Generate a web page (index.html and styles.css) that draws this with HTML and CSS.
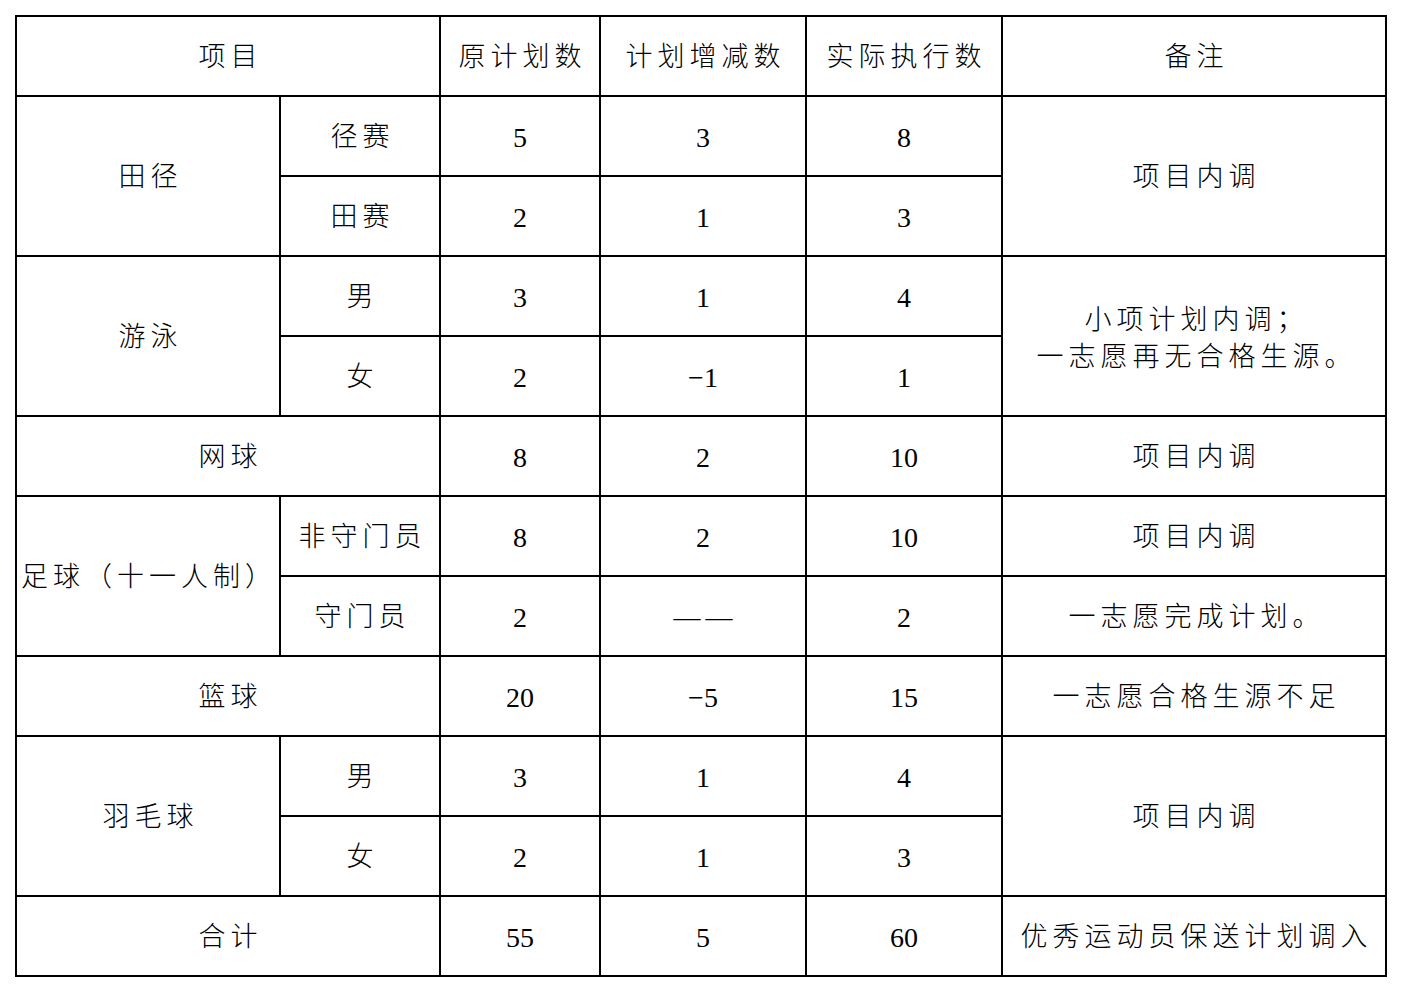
FILE: index.html
```html
<!DOCTYPE html>
<html lang="zh-CN">
<head>
<meta charset="utf-8">
<title>计划执行表</title>
<link rel="stylesheet" href="styles.css">
</head>
<body>
<table class="plan">
  <colgroup>
    <col class="c1"><col class="c2"><col class="c3"><col class="c4"><col class="c5"><col class="c6">
  </colgroup>
  <tr>
    <td colspan="2">项目</td>
    <td>原计划数</td>
    <td>计划增减数</td>
    <td>实际执行数</td>
    <td>备注</td>
  </tr>
  <tr>
    <td rowspan="2">田径</td>
    <td>径赛</td>
    <td class="num">5</td>
    <td class="num">3</td>
    <td class="num">8</td>
    <td rowspan="2">项目内调</td>
  </tr>
  <tr>
    <td>田赛</td>
    <td class="num">2</td>
    <td class="num">1</td>
    <td class="num">3</td>
  </tr>
  <tr>
    <td rowspan="2">游泳</td>
    <td>男</td>
    <td class="num">3</td>
    <td class="num">1</td>
    <td class="num">4</td>
    <td rowspan="2" class="multi">小项计划内调；<br>一志愿再无合格生源。</td>
  </tr>
  <tr>
    <td>女</td>
    <td class="num">2</td>
    <td class="num">−1</td>
    <td class="num">1</td>
  </tr>
  <tr>
    <td colspan="2">网球</td>
    <td class="num">8</td>
    <td class="num">2</td>
    <td class="num">10</td>
    <td>项目内调</td>
  </tr>
  <tr>
    <td rowspan="2" class="wide">足球（十一人制）</td>
    <td>非守门员</td>
    <td class="num">8</td>
    <td class="num">2</td>
    <td class="num">10</td>
    <td>项目内调</td>
  </tr>
  <tr>
    <td>守门员</td>
    <td class="num">2</td>
    <td>——</td>
    <td class="num">2</td>
    <td>一志愿完成计划。</td>
  </tr>
  <tr>
    <td colspan="2">篮球</td>
    <td class="num">20</td>
    <td class="num">−5</td>
    <td class="num">15</td>
    <td>一志愿合格生源不足</td>
  </tr>
  <tr>
    <td rowspan="2">羽毛球</td>
    <td>男</td>
    <td class="num">3</td>
    <td class="num">1</td>
    <td class="num">4</td>
    <td rowspan="2">项目内调</td>
  </tr>
  <tr>
    <td>女</td>
    <td class="num">2</td>
    <td class="num">1</td>
    <td class="num">3</td>
  </tr>
  <tr>
    <td colspan="2">合计</td>
    <td class="num">55</td>
    <td class="num">5</td>
    <td class="num">60</td>
    <td>优秀运动员保送计划调入</td>
  </tr>
</table>
</body>
</html>
```

FILE: styles.css
```css
html, body {
  margin: 0;
  padding: 0;
  background: #ffffff;
}

body {
  padding: 15px 0 0 15px;
  font-family: "Liberation Serif", "Noto Sans CJK SC", serif;
  color: #000000;
}

.plan {
  border-collapse: collapse;
  table-layout: fixed;
  width: 1370px;
}

.c1 { width: 264px; }
.c2 { width: 160px; }
.c3 { width: 160px; }
.c4 { width: 206px; }
.c5 { width: 196px; }
.c6 { width: 384px; }

.plan td {
  border: 2px solid #000000;
  height: 75px;
  padding: 3px 0 0 5px;
  text-align: center;
  vertical-align: middle;
  font-size: 27px;
  font-weight: 300;
  letter-spacing: 5px;
  line-height: 37px;
  white-space: nowrap;
}

.plan td.num {
  letter-spacing: 0;
  padding-left: 0;
  font-size: 28px;
}

.plan td.multi {
  padding-top: 6px;
  height: 72px;
}

.plan td.wide {
  padding-left: 2px;
  letter-spacing: 5px;
}
```
